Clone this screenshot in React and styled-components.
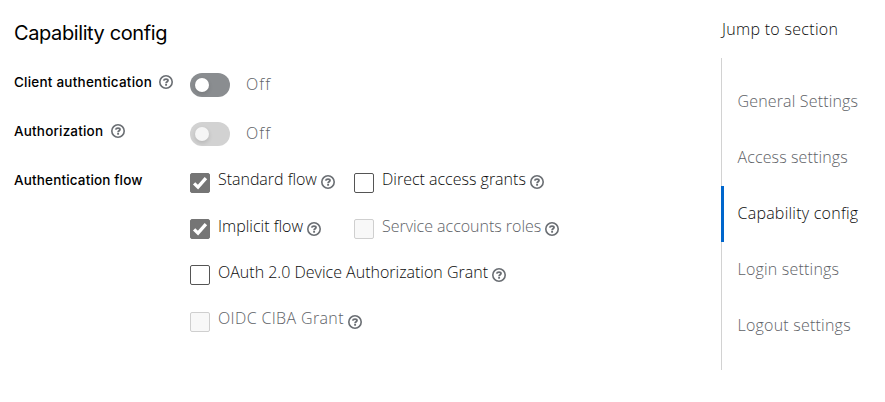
import React from "react";
import styled, { createGlobalStyle } from "styled-components";

const GlobalStyle = createGlobalStyle`
  *, *::before, *::after { box-sizing: border-box; }
  body {
    margin: 0;
    background: #fff;
    color: #0c0c0c;
    font: 300 16px/24px "Open Sans", sans-serif;
  }
`;

const Page = styled.main`
  display: grid;
  grid-template-columns: 707px 150px;
  height: 402px;
  padding-left: 14px;
  overflow: hidden;
`;

const Section = styled.section`
  padding-top: 20px;
`;

const Title = styled.h1`
  margin: 0 0 29px;
  color: #000;
  font: 400 20px/26px "Inter", sans-serif;
  letter-spacing: -0.4px;
  white-space: nowrap;
`;

const Field = styled.div`
  display: grid;
  grid-template-columns: 176px 1fr;
  height: ${(p) => p.$height || 49}px;
`;

const FieldLabel = styled.div`
  display: flex;
  height: 14px;
  font: 500 13.5px/14px "Inter", sans-serif;
  color: #000;
`;

const LabelText = styled.span`
  width: ${(p) => p.$width}px;
  letter-spacing: ${(p) => p.$track || 0}px;
  white-space: nowrap;
`;

const SwitchRow = styled.div`
  display: flex;
  gap: 16px;
  height: 24px;
  margin-top: -2px;
  color: #5e6267;
`;

const Track = styled.span`
  display: flex;
  align-items: center;
  width: 40px;
  height: 24px;
  padding-left: 4.8px;
  border-radius: 12px;
  background: ${(p) => (p.$disabled ? "#d2d2d2" : "#8a8d90")};
`;

const Knob = styled.span`
  width: 14.4px;
  height: 14.4px;
  border-radius: 50%;
  background: ${(p) => (p.$disabled ? "#f5f5f5" : "#fff")};
  box-shadow: 0 2px 4px rgba(3, 3, 3, 0.14);
`;

const State = styled.span`
  letter-spacing: 1.1px;
  line-height: 23px;
`;

const FlowGrid = styled.div`
  display: grid;
  grid-template-columns: 164px 1fr;
  grid-template-rows: 47px 46px 47px 30px;
  margin-top: -5px;
`;

const Option = styled.label`
  display: flex;
  align-items: flex-start;
  grid-column: ${(p) => (p.$wide ? "1 / -1" : "auto")};
  color: ${(p) => (p.$disabled ? "#5e6267" : "#0c0c0c")};
`;

const OptionText = styled(LabelText)`
  line-height: ${(p) => p.$line || 22}px;
`;

const Box = styled.span`
  display: flex;
  flex: none;
  width: 20px;
  height: 20px;
  margin: ${(p) => p.$top}px 8px 0 0;
  border: 1px solid ${(p) => (p.$disabled ? "#cfcfcf" : p.$checked ? "#757575" : "#555")};
  border-radius: 2px;
  background: ${(p) => (p.$disabled ? "#f8f8f8" : p.$checked ? "#757575" : "#fff")};
`;

const HelpSvg = styled.svg`
  flex: none;
  width: 14px;
  height: 14px;
  margin-top: ${(p) => p.$top || 0}px;
  color: #6a6e73;
`;

const Nav = styled.nav`
  padding-top: 18px;
`;

const NavTitle = styled.div`
  height: 40px;
  padding-left: 1px;
  line-height: 23px;
  letter-spacing: 0.3px;
  white-space: nowrap;
`;

const NavList = styled.ul`
  height: 312px;
  margin: 0;
  padding: 16px 0;
  list-style: none;
  border-left: 1px solid #d2d2d2;
`;

const NavItem = styled.li`
  height: 56px;
  margin-left: -1px;
  padding: 15px 0 17px ${(p) => (p.$active ? 13.5 : 16.5)}px;
  border-left: ${(p) => (p.$active ? "3px solid #06c" : "0")};
  color: ${(p) => (p.$active ? "#0c0c0c" : "#5e6267")};
  letter-spacing: ${(p) => p.$track}px;
  white-space: nowrap;
`;

const Help = ({ top }) => (
  <HelpSvg $top={top} viewBox="0 0 14 14" fill="none" stroke="currentColor">
    <circle cx="7" cy="7" r="6.2" strokeWidth="1.6" />
    <path d="M4.7 5.7C4.9 4.6 5.8 4.1 7 4.1c1.2 0 2 .6 2 1.5C9 6.8 7.1 6.8 7.1 8.2" strokeWidth="1.8" />
    <path d="M7.1 8.9v1.8" strokeWidth="1.9" />
  </HelpSvg>
);

const Check = () => (
  <svg width="18" height="18" viewBox="0 0 18 18" fill="none" stroke="#fff" strokeWidth="3.3">
    <path d="M3.1 9.4 7 13.1 14.9 4.1" />
  </svg>
);

const Switch = ({ disabled }) => (
  <SwitchRow>
    <Track $disabled={disabled}>
      <Knob $disabled={disabled} />
    </Track>
    <State>Off</State>
  </SwitchRow>
);

const flows = [
  { text: "Standard flow", width: 103, track: -0.03, top: 5, checked: true },
  { text: "Direct access grants", width: 148, track: 0, top: 5 },
  { text: "Implicit flow", width: 89, track: 0, top: 4, checked: true },
  { text: "Service accounts roles", width: 163, track: -0.02, top: 4, disabled: true },
  { text: "OAuth 2.0 Device Authorization Grant", width: 274, track: 0, top: 4, wide: true },
  { text: "OIDC CIBA Grant", width: 130, track: 0.36, top: 4, line: 20, disabled: true, wide: true },
];

const sections = [
  { text: "General Settings", track: 0.16 },
  { text: "Access settings", track: 0.12 },
  { text: "Capability config", track: 0.24, active: true },
  { text: "Login settings", track: 0.2 },
  { text: "Logout settings", track: 0.22 },
];

export default function App() {
  return (
    <>
      <GlobalStyle />
      <Page>
        <Section>
          <Title>Capability config</Title>
          <Field>
            <FieldLabel>
              <LabelText $width={145} $track={0.22}>Client authentication</LabelText>
              <Help />
            </FieldLabel>
            <Switch />
          </Field>
          <Field>
            <FieldLabel>
              <LabelText $width={97} $track={0.18}>Authorization</LabelText>
              <Help />
            </FieldLabel>
            <Switch disabled />
          </Field>
          <Field $height={170}>
            <FieldLabel>
              <LabelText $width={150} $track={0.16}>Authentication flow</LabelText>
            </FieldLabel>
            <FlowGrid>
              {flows.map((f) => (
                <Option key={f.text} $disabled={f.disabled} $wide={f.wide}>
                  <Box $top={f.top} $checked={f.checked} $disabled={f.disabled}>
                    {f.checked && <Check />}
                  </Box>
                  <OptionText $width={f.width} $track={f.track} $line={f.line}>{f.text}</OptionText>
                  <Help top={7} />
                </Option>
              ))}
            </FlowGrid>
          </Field>
        </Section>
        <Nav>
          <NavTitle>Jump to section</NavTitle>
          <NavList>
            {sections.map((s) => (
              <NavItem key={s.text} $active={s.active} $track={s.track}>{s.text}</NavItem>
            ))}
          </NavList>
        </Nav>
      </Page>
    </>
  );
}
